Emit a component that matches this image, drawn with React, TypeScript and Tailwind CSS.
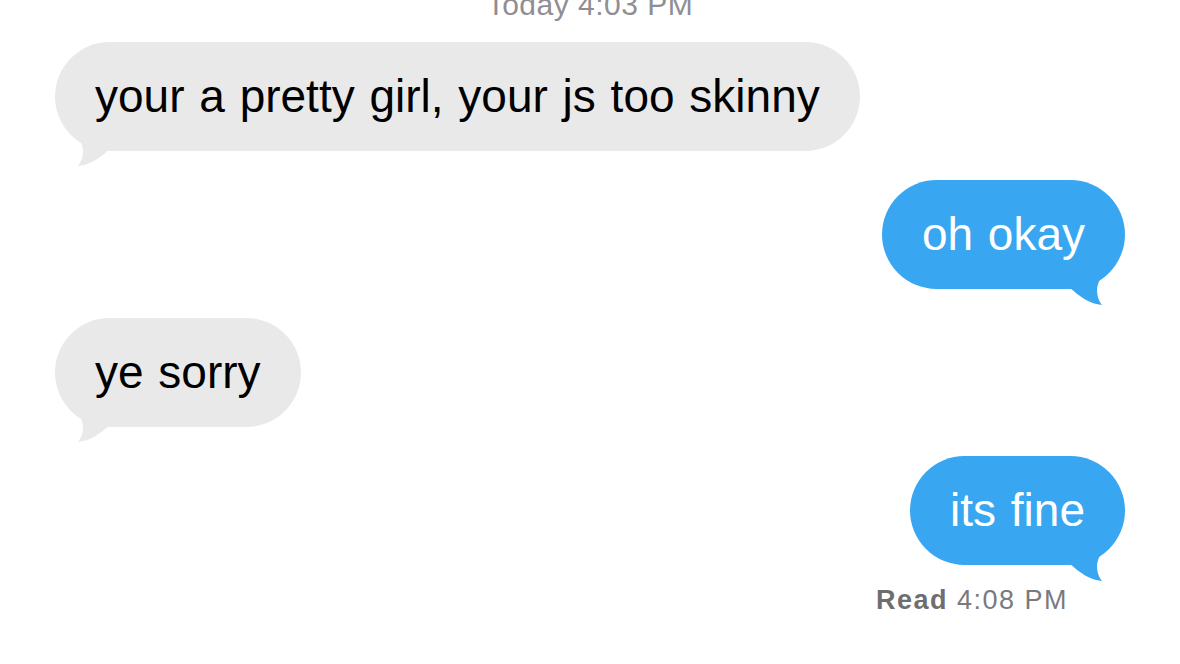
const messages = [
  { id: 1, fromMe: false, text: "your a pretty girl, your js too skinny" },
  { id: 2, fromMe: true, text: "oh okay" },
  { id: 3, fromMe: false, text: "ye sorry" },
  { id: 4, fromMe: true, text: "its fine" },
];

// curled tail hanging off the bottom corner of a bubble
function Tail({ fromMe }: { fromMe: boolean }) {
  return (
    <svg
      width="60"
      height="50"
      viewBox="0 0 60 50"
      className={
        fromMe
          ? "absolute right-0 bottom-[-16px]"
          : "absolute left-0 bottom-[-15px] -scale-x-100"
      }
    >
      <path
        d="M10 12 L44 8 C38 18 33 26 32 34 C32 42 34 46 37 50 C25 49 15 42 4 32 Z"
        fill={fromMe ? "#38a6f0" : "#e9e9e9"}
      />
    </svg>
  );
}

function Bubble({ fromMe, text }: { fromMe: boolean; text: string }) {
  return (
    <div className={fromMe ? "flex justify-end" : "flex justify-start"}>
      <div
        className={
          fromMe
            ? "relative rounded-[55px] bg-[#38a6f0] px-[40px] py-[27px] text-white"
            : "relative rounded-[55px] bg-[#e9e9e9] px-[40px] py-[27px] text-black"
        }
      >
        <Tail fromMe={fromMe} />
        <p className="relative text-[46px] leading-[55px] [word-spacing:2px]">
          {text}
        </p>
      </div>
    </div>
  );
}

export default function App() {
  return (
    <div className="h-[664px] w-full overflow-hidden bg-white font-['Liberation_Sans',Arial,sans-serif]">
      <div className="flex flex-col px-[55px]">
        <p className="-mt-[12px] h-[54px] text-center text-[30px] leading-[34px] tracking-[0.5px] text-[#8e8e93]">
          Today 4:03 PM
        </p>
        <div className="flex flex-col gap-[29px]">
          {messages.map((m) => (
            <Bubble key={m.id} fromMe={m.fromMe} text={m.text} />
          ))}
        </div>
        <p className="mt-[19px] pr-[57px] text-right text-[27px] leading-[32px] tracking-[1.5px] text-[#7a7a7e]">
          <span className="font-bold text-[#6e6e70]">Read</span> 4:08 PM
        </p>
      </div>
    </div>
  );
}
